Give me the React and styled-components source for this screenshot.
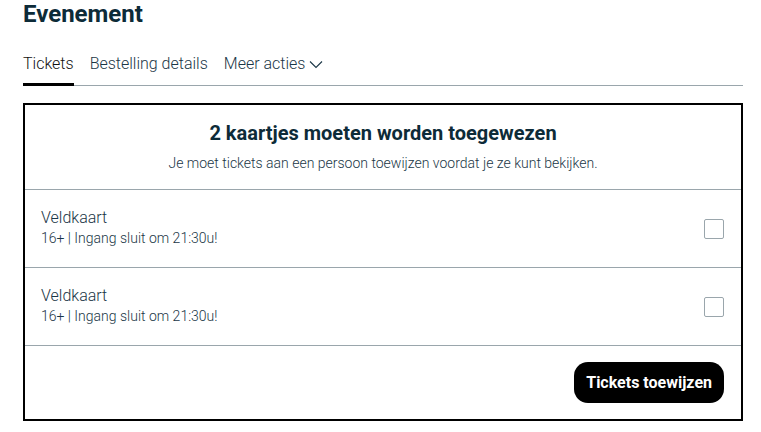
import React from 'react';
import styled, { createGlobalStyle } from 'styled-components';

const GlobalStyle = createGlobalStyle`
    html, body {
        margin: 0;
        padding: 0;
        background: #fff;
    }
    body {
        font-family: Roboto, "Liberation Sans", sans-serif;
        color: #0d2b38;
    }
`;

const StyledPage = styled.div`
    padding: 0 18px 0 23px;
`;

const StyledTitle = styled.h1`
    margin: 0;
    padding-top: 0;
    font-size: 24px;
    line-height: 28px;
    font-weight: 700;
    color: #0d2b38;
`;

const StyledTabs = styled.div`
    display: flex;
    align-items: flex-end;
    gap: 16px;
    margin-top: 26px;
    border-bottom: 1px solid #9aa6ac;
`;

const StyledTab = styled.div`
    display: flex;
    align-items: center;
    gap: 4px;
    font-size: 16px;
    font-weight: 300;
    line-height: 20px;
    padding-bottom: 9px;
    color: ${(props) => (props.active ? '#111' : '#1a3646')};
    border-bottom: 3px solid ${(props) => (props.active ? '#000' : 'transparent')};
    margin-bottom: -1px;
`;

const StyledCard = styled.div`
    margin-top: 17px;
    border: 2px solid #000;
    display: flex;
    flex-direction: column;
`;

const StyledCardHeader = styled.div`
    height: 85px;
    display: flex;
    flex-direction: column;
    align-items: center;
    justify-content: center;
    gap: 10px;
    border-bottom: 1px solid #9aa6ac;
    padding-bottom: 1px;
    box-sizing: border-box;
`;

const StyledHeading = styled.div`
    font-size: 20px;
    font-weight: 700;
    line-height: 24px;
    color: #0d2b38;
`;

const StyledSubheading = styled.div`
    font-size: 14px;
    font-weight: 300;
    line-height: 17px;
    color: #1a3646;
`;

const StyledRow = styled.div`
    height: 78px;
    box-sizing: border-box;
    display: flex;
    align-items: center;
    justify-content: space-between;
    padding: 0 17px 0 16px;
    border-bottom: 1px solid #9aa6ac;
`;

const StyledRowInfo = styled.div`
    display: flex;
    flex-direction: column;
    gap: 3px;
    margin-top: -2px;
`;

const StyledRowName = styled.div`
    font-size: 16px;
    font-weight: 300;
    line-height: 19px;
    color: #1a3646;
`;

const StyledRowMeta = styled.div`
    font-size: 14px;
    font-weight: 300;
    line-height: 17px;
    color: #1a3646;
`;

const StyledCheckbox = styled.span`
    width: 18px;
    height: 18px;
    border: 1px solid #9aa6ac;
    border-radius: 2px;
    box-sizing: content-box;
`;

const StyledFooter = styled.div`
    display: flex;
    justify-content: flex-end;
    padding: 16px 17px 16px 16px;
`;

const StyledButton = styled.button`
    height: 41px;
    padding: 0 12px;
    border: none;
    border-radius: 14px;
    background: #000;
    color: #fff;
    font-family: Roboto, "Liberation Sans", sans-serif;
    font-size: 16px;
    font-weight: 700;
`;

const Chevron = () => (
    <svg width="14" height="9" viewBox="0 0 14 9" fill="none">
        <path d="M1 1.5l6 6 6-6" stroke="#1a3646" strokeWidth="1.1" />
    </svg>
);

const tickets = [
    { id: 1, name: 'Veldkaart', meta: '16+ | Ingang sluit om 21:30u!' },
    { id: 2, name: 'Veldkaart', meta: '16+ | Ingang sluit om 21:30u!' }
];

const App = () => (
    <StyledPage>
        <GlobalStyle />
        <StyledTitle>Evenement</StyledTitle>
        <StyledTabs>
            <StyledTab active>Tickets</StyledTab>
            <StyledTab>Bestelling details</StyledTab>
            <StyledTab>
                Meer acties <Chevron />
            </StyledTab>
        </StyledTabs>

        <StyledCard>
            <StyledCardHeader>
                <StyledHeading>2 kaartjes moeten worden toegewezen</StyledHeading>
                <StyledSubheading>
                    Je moet tickets aan een persoon toewijzen voordat je ze kunt bekijken.
                </StyledSubheading>
            </StyledCardHeader>
            {tickets.map((ticket) => (
                <StyledRow key={ticket.id}>
                    <StyledRowInfo>
                        <StyledRowName>{ticket.name}</StyledRowName>
                        <StyledRowMeta>{ticket.meta}</StyledRowMeta>
                    </StyledRowInfo>
                    <StyledCheckbox />
                </StyledRow>
            ))}
            <StyledFooter>
                <StyledButton>Tickets toewijzen</StyledButton>
            </StyledFooter>
        </StyledCard>
    </StyledPage>
);

export default App;
